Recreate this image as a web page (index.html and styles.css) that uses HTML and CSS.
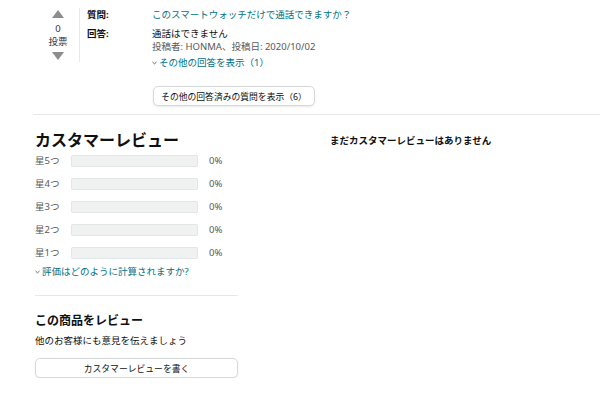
FILE: index.html
```html
<!DOCTYPE html>
<html lang="ja">
<head>
<meta charset="utf-8">
<link rel="stylesheet" href="styles.css">
</head>
<body>
<section class="qa">
  <div class="vote">
    <span class="tri tri-up"></span>
    <span class="vote-count">0</span>
    <span class="vote-label">投票</span>
    <span class="tri tri-down"></span>
  </div>
  <div class="qa-body">
    <div class="qa-row q-row">
      <span class="qa-label">質問:</span>
      <a class="link">このスマートウォッチだけで通話できますか？</a>
    </div>
    <div class="qa-row">
      <span class="qa-label">回答:</span>
      <div class="answer">
        <div class="answer-text">通話はできません</div>
        <div class="meta">投稿者: HONMA、投稿日: 2020/10/02</div>
        <a class="link more"><svg class="chev" viewBox="0 0 6 4" width="5" height="4"><path d="M0.6 0.8 L3 3 L5.4 0.8" fill="none" stroke="#565959" stroke-width="1.1"/></svg>その他の回答を表示（1）</a>
      </div>
    </div>
  </div>
</section>
<div class="more-q">
  <button class="btn btn-more">その他の回答済みの質問を表示（6）</button>
</div>
<hr class="rule-wide">
<section class="reviews">
  <div class="left">
    <h2 class="title">カスタマーレビュー</h2>
    <div class="hist">
      <div class="hist-row"><span class="hist-label">星5つ</span><span class="bar"></span><span class="pct">0%</span></div>
      <div class="hist-row"><span class="hist-label">星4つ</span><span class="bar"></span><span class="pct">0%</span></div>
      <div class="hist-row"><span class="hist-label">星3つ</span><span class="bar"></span><span class="pct">0%</span></div>
      <div class="hist-row"><span class="hist-label">星2つ</span><span class="bar"></span><span class="pct">0%</span></div>
      <div class="hist-row"><span class="hist-label">星1つ</span><span class="bar"></span><span class="pct">0%</span></div>
    </div>
    <a class="link calc"><svg class="chev" viewBox="0 0 6 4" width="5" height="4"><path d="M0.6 0.8 L3 3 L5.4 0.8" fill="none" stroke="#565959" stroke-width="1.1"/></svg>評価はどのように計算されますか?</a>
    <hr class="rule-left">
    <h3 class="sub">この商品をレビュー</h3>
    <p class="sub-text">他のお客様にも意見を伝えましょう</p>
    <button class="btn btn-write">カスタマーレビューを書く</button>
  </div>
  <div class="right">
    <p class="none">まだカスタマーレビューはありません</p>
  </div>
</section>
</body>
</html>
```
FILE: styles.css
```css
* { box-sizing: border-box; }
html, body { background: #fff; }
body {
  margin: 0;
  font-family: "Noto Sans", "Noto Sans CJK JP", sans-serif;
  font-size: 9.5px;
  line-height: 13px;
  color: #0f1111;
}
.link { color: #007185; text-decoration: none; }
.qa {
  display: flex;
  padding: 8px 0 0 47px;
}
.vote {
  width: 22px;
  display: flex;
  flex-direction: column;
  align-items: center;
  padding-top: 2px;
  color: #333;
}
.tri { display: block; width: 0; height: 0; border-left: 6px solid transparent; border-right: 6px solid transparent; }
.tri-up { border-bottom: 8px solid #8d8d8d; margin-bottom: 4px; }
.tri-down { border-top: 8px solid #8d8d8d; margin-top: 4px; }
.vote-count, .vote-label { line-height: 13px; }
.qa-body {
  margin-left: 10px;
  border-left: 1px solid #e7e7e7;
  padding-left: 7px;
  height: 54px;
}
.qa-row { display: flex; }
.q-row { margin-bottom: 6px; }
.qa-label { width: 65px; font-weight: 700; flex: none; }
.meta { color: #565959; }
.more { display: flex; align-items: center; margin-top: 3px; }
.chev { margin-right: 2px; }
.more-q { padding: 24px 0 0 153px; }
.btn {
  display: block;
  font-family: inherit;
  font-size: 8.8px;
  color: #0f1111;
  background: #fff;
  border: 1px solid #d5d9d9;
  border-radius: 5px;
  box-shadow: 0 1px 2px rgba(213, 217, 217, 0.5);
  height: 20px;
  padding: 0;
  white-space: nowrap;
  text-align: center;
}
.btn-more { width: 162px; }
.rule-wide {
  margin: 8px 0 0 33px;
  border: 0;
  border-top: 1px solid #e7e7e7;
}
.reviews { display: flex; padding-left: 35px; }
.left { width: 203px; }
.title {
  margin: 15px 0 0;
  font-size: 16px;
  line-height: 20px;
  font-weight: 700;
}
.hist { margin-top: -1px; }
.hist-row { display: flex; align-items: center; height: 23px; }
.hist-label { width: 36px; color: #565959; }
.bar {
  width: 127px;
  height: 12px;
  background: #f0f2f2;
  border-radius: 2px;
  box-shadow: inset 0 0 0 1px #e3e6e6;
}
.pct { margin-left: 11px; color: #565959; }
.calc { display: flex; align-items: center; margin-top: 1px; }
.rule-left {
  margin: 17px 0 0;
  border: 0;
  border-top: 1px solid #e7e7e7;
}
.sub {
  margin: 17px 0 0;
  font-size: 12px;
  line-height: 16px;
  font-weight: 700;
}
.sub-text { margin: 5px 0 0; }
.btn-write { width: 203px; margin-top: 11px; }
.right { margin-left: 92px; }
.none { margin: 19px 0 0; font-weight: 700; }
```
